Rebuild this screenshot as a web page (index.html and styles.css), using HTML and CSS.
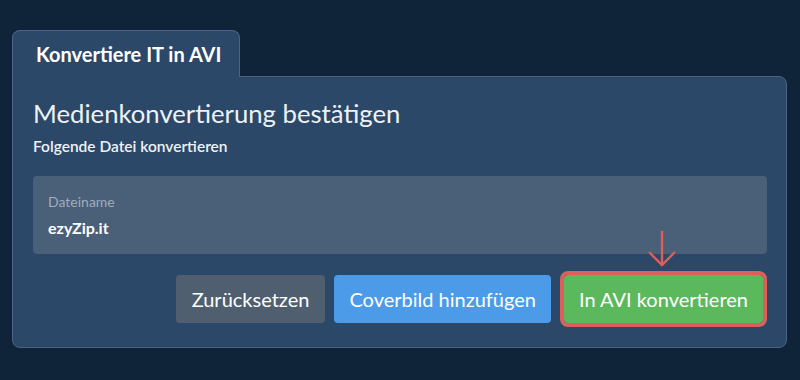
FILE: index.html
```html
<!DOCTYPE html>
<html lang="de">
<head>
<meta charset="utf-8">
<link rel="stylesheet" href="styles.css">
</head>
<body>
<div class="wrap">
  <div class="tab">Konvertiere IT in AVI</div>
  <div class="panel">
    <h1 class="title">Medienkonvertierung bestätigen</h1>
    <p class="subtitle">Folgende Datei konvertieren</p>
    <div class="field">
      <div class="field-label">Dateiname</div>
      <div class="field-value">ezyZip.it</div>
    </div>
    <div class="actions">
      <button class="btn btn-gray">Zurücksetzen</button>
      <button class="btn btn-blue">Coverbild hinzufügen</button>
      <button class="btn btn-green">In AVI konvertieren
        <svg class="arrow" width="30" height="38" viewBox="0 0 30 38"><path d="M15 1 V35 M2 22 L15 35 L28 22" fill="none" stroke="#dd5f5a" stroke-width="2.4"/></svg>
      </button>
    </div>
  </div>
</div>
</body>
</html>
```
FILE: styles.css
```css
html, body {
  margin: 0;
  padding: 0;
  background: #0f2339;
  font-family: Lato, "Open Sans", sans-serif;
  color: #ffffff;
}
.wrap {
  padding: 30px 13px 0 12px;
}
.tab {
  position: relative;
  z-index: 1;
  display: inline-block;
  box-sizing: border-box;
  width: 228px;
  height: 47px;
  margin-bottom: -1px;
  padding: 11px 0 0 23px;
  background: #2c4868;
  border: 1px solid #4a6584;
  border-bottom: none;
  border-radius: 8px 8px 0 0;
  font-size: 20px;
  font-weight: 700;
}
.panel {
  background: #2c4868;
  border: 1px solid #4a6584;
  border-radius: 0 8px 8px 8px;
  padding: 19px 19px 24px 20px;
}
.title {
  margin: 0;
  font-size: 25.7px;
  font-weight: 400;
  line-height: 34px;
  color: #eef2f6;
}
.subtitle {
  margin: 7px 0 0;
  font-size: 15.5px;
  font-weight: 600;
  line-height: 18px;
  color: #eef2f6;
}
.field {
  margin-top: 21px;
  background: #4a5f78;
  border-radius: 4px;
  padding: 18px 15px 18px;
  height: 42px;
}
.field-label {
  font-size: 14px;
  line-height: 16px;
  color: #a0adbb;
}
.field-value {
  margin-top: 8px;
  font-size: 16px;
  font-weight: 700;
  line-height: 20px;
  color: #ffffff;
}
.actions {
  display: flex;
  justify-content: flex-end;
  gap: 9px;
  margin-top: 21px;
  padding-right: 4px;
}
.btn {
  position: relative;
  height: 48px;
  border: none;
  border-radius: 4px;
  font-family: Lato, "Open Sans", sans-serif;
  font-size: 20px;
  color: #ffffff;
  padding: 0 15px;
}
.btn-gray { background: #4f5f6f; padding: 0 16px; }
.btn-blue { background: #4c9be8; }
.btn-green {
  background: #5cb85c;
  outline: 4px solid #dd5f5a;
  margin-left: 4px;
}
.arrow {
  position: absolute;
  left: 50%;
  top: -45px;
  margin-left: -16px;
}
```
